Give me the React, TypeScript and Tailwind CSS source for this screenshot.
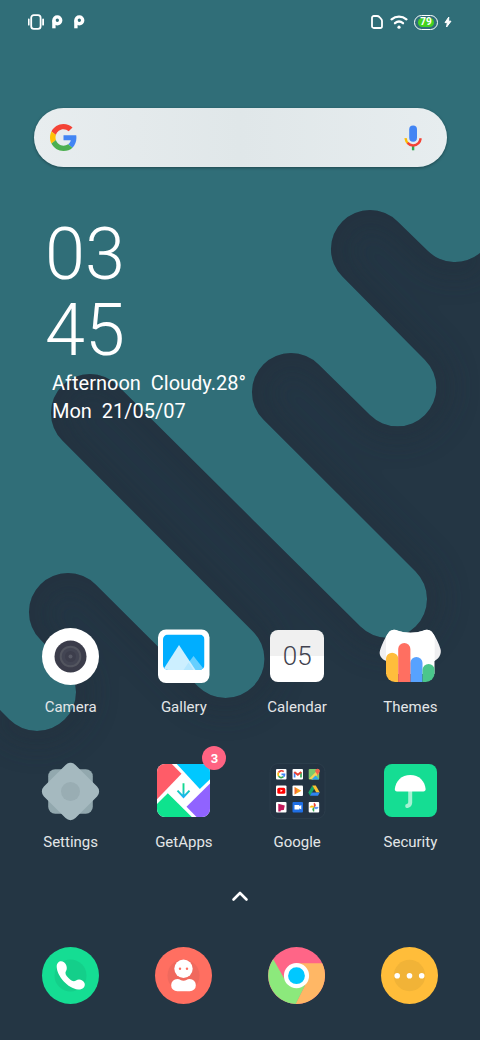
import type { ReactNode } from "react";

const DARK_EDGE =
  "M480 253A39 39 0 0 1 427.4 250.6L397.6 221.4A38 38 0 0 0 342.4 276.6L425 360A38 38 0 0 1 370 415L318.6 364.4A38 38 0 0 0 263.4 419.6L415.6 571.4A38 38 0 0 1 360.4 626.6L117.6 385.4A38 38 0 0 0 62.4 440.6L253 631.4A38 38 0 0 1 198 686.6L95.6 584.4A38 38 0 0 0 40.4 639.6L64.6 664.4A38 38 0 0 1 9.4 719.6L0 710";

const Wallpaper = () => (
  <svg
    className="col-start-1 row-start-1 h-full w-full"
    viewBox="0 0 480 1040"
    preserveAspectRatio="xMidYMid slice"
    aria-hidden="true"
  >
    <defs>
      <clipPath id="dark-clip">
        <path d={`${DARK_EDGE}V1040H480Z`} />
      </clipPath>
      <filter id="edge-blur" x="-20%" y="-20%" width="140%" height="140%">
        <feGaussianBlur stdDeviation="14" />
      </filter>
    </defs>
    <rect width="480" height="1040" fill="#306e78" />
    <path d={`${DARK_EDGE}V1040H480Z`} fill="#243644" />
    {/* soft shade along the cut-out edge */}
    <g clipPath="url(#dark-clip)">
      <path
        d={DARK_EDGE}
        fill="none"
        stroke="#202e3b"
        strokeWidth="30"
        opacity="0.4"
        filter="url(#edge-blur)"
      />
    </g>
  </svg>
);

const GoogleG = ({ className }: { className?: string }) => (
  <svg className={className} viewBox="0 0 48 48" aria-hidden="true">
    <path fill="#f44336" d="M24 9.5c3.54 0 6.71 1.22 9.21 3.6l6.85-6.85C35.9 2.38 30.47 0 24 0 14.62 0 6.51 5.38 2.56 13.22l7.98 6.19C12.43 13.72 17.74 9.5 24 9.5z" />
    <path fill="#4285f4" d="M46.98 24.55c0-1.57-.15-3.09-.38-4.55H24v9.02h12.94c-.58 2.96-2.26 5.48-4.78 7.18l7.73 6c4.51-4.18 7.09-10.36 7.09-17.65z" />
    <path fill="#ffc107" d="M10.53 28.59c-.48-1.45-.76-2.99-.76-4.59s.27-3.14.76-4.59l-7.98-6.19C.92 16.46 0 20.12 0 24c0 3.88.92 7.54 2.56 10.78l7.97-6.19z" />
    <path fill="#4caf50" d="M24 48c6.48 0 11.93-2.13 15.89-5.81l-7.73-6c-2.15 1.45-4.92 2.3-8.16 2.3-6.26 0-11.57-4.22-13.47-9.91l-7.98 6.19C6.51 42.62 14.62 48 24 48z" />
  </svg>
);

const ParkLogo = () => (
  <svg className="h-4 w-3" viewBox="0 0 12 16" aria-hidden="true">
    <circle cx="6.3" cy="6.3" r="3.4" fill="none" stroke="#fff" strokeWidth="3.4" />
    <path d="M1.2 6.3h3.4v8H1.2z" fill="#fff" />
  </svg>
);

const StatusBar = () => (
  <header className="flex h-11 items-center justify-between px-7">
    <div className="flex items-center">
      <svg className="h-4 w-4" viewBox="0 0 16 16" fill="none" stroke="#fff" aria-label="Vibrate">
        <rect x="3.2" y="1.2" width="9.4" height="13.6" rx="2.6" strokeWidth="1.8" />
        <path d="M.7 5.3v5.4M15.1 5.3v5.4" strokeWidth="1.8" strokeLinecap="round" />
      </svg>
      <div className="flex gap-[10px] pl-[7px]">
        <ParkLogo />
        <ParkLogo />
      </div>
    </div>
    <div className="flex items-center">
      <svg className="h-[14px] w-3" viewBox="0 0 12 14" fill="none" stroke="#fff" strokeWidth="1.8" strokeLinejoin="round" aria-label="SIM">
        <path d="M2.8 1H6c1 0 1.700.3 2.400 1l1.700 1.800c.6.6.9 1.300.9 2.200v5.200a1.800 1.800 0 0 1-1.800 1.800H2.800A1.800 1.800 0 0 1 1 11.200V2.800A1.800 1.800 0 0 1 2.800 1z" />
      </svg>
      <svg className="ml-[7px] h-4 w-[18px]" viewBox="0 0 18 16" fill="none" stroke="#fff" strokeWidth="2.300" strokeLinecap="round" aria-label="Wi-Fi">
        <path d="M1.600 5.300a11.500 11.500 0 0 1 14.800 0" />
        <path d="M5 9.200a6.300 6.300 0 0 1 8 0" />
        <circle cx="9" cy="13.200" r="1.600" fill="#fff" stroke="none" />
      </svg>
      <div className="ml-[6px] flex h-[15px] w-6 items-center justify-center rounded-full border border-white p-[2px]">
        <span className="flex h-full w-4 items-center justify-center rounded-full bg-[#43d21f] font-['Roboto',sans-serif] text-[10px] leading-none font-bold text-white">
          79
        </span>
      </div>
      <svg className="ml-[6px] h-3 w-2" viewBox="0 0 8 12" fill="#fff" aria-label="Charging">
        <path d="M4.800 1 1 6.600h2.300L2.600 11 7 5.200H4.600z" stroke="#fff" strokeLinejoin="round" />
      </svg>
    </div>
  </header>
);

const SearchBar = () => (
  <form
    role="search"
    onSubmit={(e) => e.preventDefault()}
    className="mr-[33px] ml-[34px] mt-16 flex h-[59px] items-center rounded-full bg-linear-to-r from-[#e8edef] via-[#e0e7e9] to-[#e7edef] pr-5 pl-4 shadow-[0_1px_3px_rgba(0,0,0,0.35)]"
  >
    <GoogleG className="h-[27px] w-[27px] shrink-0" />
    <input
      type="search"
      aria-label="Search Google"
      className="h-full min-w-0 flex-1 bg-transparent px-3 font-['Roboto',sans-serif] text-[16px] text-gray-800 outline-none"
    />
    <button type="button" aria-label="Voice search">
      <svg className="h-7 w-7" viewBox="0 0 28 28" fill="none">
        <rect x="10.200" y="1.500" width="7.800" height="16.200" rx="3.900" fill="#4285f4" />
        <path d="M14.100 22v4.300" stroke="#34a853" strokeWidth="2.400" />
        <path d="M6.500 14.200c.3 2.200 1.100 4 2.600 5.200" stroke="#fbbc05" strokeWidth="2.400" />
        <path d="M8.500 18.900c3 3.400 8 3.400 11 .3 1.200-1.300 1.900-3 2.200-5" stroke="#f44336" strokeWidth="2.400" />
      </svg>
    </button>
  </form>
);

const ClockWidget = () => (
  <section className="mt-[50px] pl-[45px] font-['Roboto',sans-serif] text-white">
    <time className="block text-[72px] leading-[76px] font-light whitespace-pre-line" dateTime="03:45">
      {"03\n45"}
    </time>
    <p className="pl-[7px] text-[20px] leading-7 whitespace-pre-line">
      Afternoon&nbsp; Cloudy.28°{"\n"}Mon&nbsp; 21/05/07
    </p>
  </section>
);

const Svg = ({ children }: { children: ReactNode }) => (
  <svg className="h-full w-full overflow-visible" viewBox="0 0 57 57" aria-hidden="true">
    {children}
  </svg>
);

const CameraIcon = () => (
  <Svg>
    <circle cx="28.5" cy="28.5" r="28.5" fill="#fff" />
    <circle cx="28.5" cy="28.5" r="16" fill="#3b3c4a" />
    <circle cx="28.5" cy="28.5" r="9.8" fill="#434553" stroke="#53555f" strokeWidth="2" />
    <circle cx="28.5" cy="28.5" r="5.5" fill="#3d3e4c" />
    <circle cx="28.5" cy="28.5" r="2" fill="#585a66" />
  </Svg>
);

const GalleryIcon = () => (
  <Svg>
    <clipPath id="gallery-photo">
      <rect x="8" y="6.5" width="41.5" height="35.5" rx="5" />
    </clipPath>
    <rect x="3" y="1.5" width="51.5" height="53.5" rx="8" fill="#fff" />
    <g clipPath="url(#gallery-photo)">
      <path d="M8 6.5h41.5V42H8z" fill="#00aeff" />
      <path d="M38.5 28 49.5 42H28z" fill="#66cfff" />
      <path d="M24 17 40.5 42H8z" fill="#ccefff" />
      <path d="m33.5 34.5 5 7.5H28.5z" fill="#b5e7ff" />
    </g>
  </Svg>
);

const CalendarIcon = () => (
  <div className="mx-auto mt-[2px] flex h-[52px] w-[54px] items-center justify-center rounded-[8px] bg-linear-to-b from-[#f0f0f0] from-50% to-white to-50% font-['Roboto',sans-serif] text-[26px] leading-none font-light text-[#41424f]">
    05
  </div>
);

const SHIRT =
  "M4.200 33C0 31.500-3.500 27.500-2 22.500-.5 17.500 3 9.500 6.500 4.700 9 1.500 12.500 1.300 16 2.700c7 2.600 18 2.600 25 0C44.500 1.300 48 1.500 50.500 4.700 54 9.500 57 16 58.500 21c1.500 5-2 10-6 12z";

const ThemesIcon = () => (
  <Svg>
    <clipPath id="themes-body">
      <path d="M4 0h48.700v45a9 9 0 0 1-9 9H13a9 9 0 0 1-9-9z" />
    </clipPath>
    <path d={SHIRT} fill="#efeff1" />
    <g clipPath="url(#themes-body)">
      <path d={SHIRT} fill="#fff" />
      <path d="M4 32h48.700v14H4z" fill="#fff" />
      <path d="M4 30.200a6.200 6.200 0 0 1 12.300 0V54H4z" fill="#ffbd3c" />
      <path d="M28.300 35a6.100 6.100 0 0 1 12.200 0v19H28.300z" fill="#57a2ff" />
      <path d="M40.500 42a6.100 6.100 0 0 1 12.200 0v12H40.500z" fill="#4bc68b" />
      <path d="M16.200 21a6.100 6.100 0 0 1 12.200 0v33H16.200z" fill="#ff6f61" />
    </g>
  </Svg>
);

const SettingsIcon = () => (
  <Svg>
    <rect x="6.2" y="6.2" width="44.6" height="44.6" rx="7" fill="#92a8ae" />
    <rect x="6.2" y="6.2" width="44.6" height="44.6" rx="7" fill="#a5b9bf" transform="rotate(45 28.5 28.5)" />
    <circle cx="28.5" cy="28.5" r="9.5" fill="#99adb3" />
  </Svg>
);

const GetAppsIcon = () => (
  <Svg>
    <clipPath id="getapps-tile">
      <rect x="2" y="1" width="53" height="53" rx="8" />
    </clipPath>
    <linearGradient id="getapps-arrow" x1="0" y1="20" x2="0" y2="35" gradientUnits="userSpaceOnUse">
      <stop offset="0.3" stopColor="#12d890" />
      <stop offset="0.9" stopColor="#19b4f5" />
    </linearGradient>
    <g clipPath="url(#getapps-tile)">
      <path d="M2 1h53v53H2z" fill="#fff" />
      <path d="M2 1h14.8l9.7 9.7L2 36.2z" fill="#ff5c68" />
      <path d="M21.8 1H55v15.3L44.8 26z" fill="#00c8ff" />
      <path d="M55 20.500V54H41.500l-10-10.300z" fill="#9063ff" />
      <path d="M12.800 30.300 36.800 54H2V41z" fill="#0ee38e" />
    </g>
    <path d="M28.500 20.300v14M22.500 27.700l6 6.300 6-6.300" fill="none" stroke="url(#getapps-arrow)" strokeWidth="1.9" />
  </Svg>
);

const GoogleFolderIcon = () => (
  <Svg>
    <rect x="1" y="0.5" width="55" height="55" rx="8" fill="#233342" stroke="#2b3d4b" />
    <g fill="#fff">
      <rect x="7" y="6" width="10.5" height="10.5" rx="1" />
      <rect x="23.500" y="6" width="10.5" height="10.5" rx="1" />
      <rect x="7" y="22.500" width="10.5" height="10.5" rx="1" />
      <rect x="23.500" y="22.500" width="10.5" height="10.5" rx="1" />
      <rect x="7" y="39" width="10.5" height="10.5" rx="1" />
      <rect x="39.700" y="39" width="10.5" height="10.5" rx="1" />
    </g>
    {/* search */}
    <g fill="none" strokeWidth="1.7">
      <path d="M9.500 9.500a3.300 3.300 0 0 1 5.200-.8" stroke="#ea4335" />
      <path d="M9.600 13.300a3.500 3.500 0 0 1-.1-3.800" stroke="#fbbc05" />
      <path d="M9.600 13.300a3.300 3.300 0 0 0 4.800.4" stroke="#34a853" />
      <path d="M14.400 13.700a3 3 0 0 0 1.100-2.300h-3" stroke="#4285f4" />
    </g>
    {/* mail */}
    <g fill="none" strokeWidth="1.7">
      <path d="M25.600 14.500v-5" stroke="#4285f4" />
      <path d="M32 14.500v-5" stroke="#34a853" />
      <path d="m25.300 9 3.500 2.800L32.300 9" stroke="#ea4335" strokeWidth="2" />
    </g>
    {/* maps */}
    <rect x="39.700" y="6" width="10.5" height="10.5" rx="1" fill="#7fc86c" />
    <path d="m40 15.800 9-9 1.200 3.200-6.200 6.500z" fill="#f7d154" />
    <path d="m42.500 16.500 4-4 3.700 4z" fill="#2aa4f4" />
    <path d="M46.200 7.500a2.500 2.500 0 0 1 4.700 0c.3 2-1.800 2.500-2.300 5-.5-2.500-2.600-3-2.400-5z" fill="#f2604f" />
    {/* video */}
    <rect x="8.300" y="24.800" width="8" height="6" rx="1.6" fill="#f00" />
    <path d="m11.500 26.500 2.300 1.300-2.300 1.300z" fill="#fff" />
    {/* music */}
    <path d="m25.700 24 6.700 3.800-6.700 3.700z" fill="#f9a11b" />
    <path d="m25.700 24 2.500 3.800-2.500 3.700z" fill="#f4653b" />
    {/* drive */}
    <path d="m43.300 22.500-4 7 1.800 3.200 4.200-7z" fill="#17a765" />
    <path d="M43.300 22.500h3.500l4 7h-3.500z" fill="#fbc22f" />
    <path d="M42.800 29.500h8L49 32.800h-8z" fill="#2f84f0" />
    {/* movies */}
    <path d="M9.300 40.800l6.500 1.700-1 4.500-3 .3-.3 1.200H9.300z" fill="#c2185b" />
    {/* duo */}
    <rect x="23.500" y="39" width="10.5" height="10.5" rx="1" fill="#1f6fe5" />
    <path d="M25.500 42h4.800v1.300l2-1.300v4.500l-2-1.300v1.300h-4.800z" fill="#fff" />
    {/* photos */}
    <path d="M45 44.300v-4.300a2.300 2.300 0 0 1 0 4.300z" fill="#ea4335" stroke="#ea4335" strokeWidth=".5" />
    <path d="M45 44.300h4.200a2.200 2.200 0 0 1-4.200 0z" fill="#4285f4" stroke="#4285f4" strokeWidth=".5" />
    <path d="M45 44.300v4.200a2.300 2.300 0 0 1 0-4.200z" fill="#34a853" stroke="#34a853" strokeWidth=".5" />
    <path d="M45 44.300h-4.200a2.200 2.200 0 0 1 4.200 0z" fill="#fbbc05" stroke="#fbbc05" strokeWidth=".5" />
  </Svg>
);

const SecurityIcon = () => (
  <Svg>
    <rect x="2" y="1" width="53" height="53" rx="8" fill="#15dd93" />
    <path d="M28.200 27v12.500a4 4 0 0 1-3 3.500" fill="none" stroke="#a5f2d3" strokeWidth="4" strokeLinecap="round" />
    <path d="M28.300 12c8.700 0 14.700 6.200 15.300 14 .1 1.600-.8 2.500-2.200 2.500H15c-1.500 0-2.300-1-2.200-2.500C13.600 18.200 19.600 12 28.300 12z" fill="#fff" />
  </Svg>
);

const PhoneIcon = () => (
  <Svg>
    <circle cx="28.5" cy="28.5" r="28.5" fill="#15dd93" />
    <circle cx="28.5" cy="28.5" r="16" fill="#14cf8a" />
    <path d="M14.700 19.500c0-5 4.300-6.700 7.300-4.300S25.500 22 24 24c-1.200 2-.5 4 2.500 7 3.500 3.500 5.500 4 7.500 2.500 3-2 7-.5 8.500 2.500 1.500 4-2.500 7-6.500 6.500C26 41.500 14.700 29 14.700 19.500z" fill="#fff" />
  </Svg>
);

const ContactsIcon = () => (
  <Svg>
    <circle cx="28.5" cy="28.5" r="28.5" fill="#ff6f61" />
    <circle cx="28.5" cy="28.5" r="16" fill="#f0695d" />
    <circle cx="28.5" cy="21.8" r="9.2" fill="#fff" />
    <circle cx="25" cy="21.8" r="1.2" fill="#ff6f61" />
    <circle cx="32" cy="21.8" r="1.2" fill="#ff6f61" />
    <path d="M22.300 32c3 0 3.700 1.800 6.200 1.800s3.200-1.800 6.200-1.800a6.100 6.100 0 0 1 0 12.300H22.300a6.100 6.100 0 0 1 0-12.300z" fill="#fff" />
  </Svg>
);

const ChromeIcon = () => (
  <Svg>
    <circle cx="28.5" cy="28.5" r="28.5" fill="#ff6587" />
    <path d="M28.500 16.200H54.200A28.500 28.500 0 0 1 27.700 57L37 38.500 28.500 28.500z" fill="#ffb765" />
    <path d="M5.300 12.300 16.300 31.800 28.500 28.500 37 38.500 27.700 57A28.500 28.500 0 0 1 5.300 12.300z" fill="#8ce97c" />
    <circle cx="28.5" cy="28.7" r="12.6" fill="#fff" />
    <circle cx="28.5" cy="28.7" r="8.4" fill="#00c8ff" />
  </Svg>
);

const MoreIcon = () => (
  <Svg>
    <circle cx="28.5" cy="28.5" r="28.5" fill="#ffbd3a" />
    <circle cx="28.5" cy="28.5" r="15.7" fill="#f1b337" />
    <g fill="#fff">
      <circle cx="16.2" cy="28.7" r="2.8" />
      <circle cx="28.5" cy="28.7" r="2.8" />
      <circle cx="40.7" cy="28.7" r="2.8" />
    </g>
  </Svg>
);

const apps = [
  { name: "Camera", Icon: CameraIcon },
  { name: "Gallery", Icon: GalleryIcon },
  { name: "Calendar", Icon: CalendarIcon },
  { name: "Themes", Icon: ThemesIcon },
  { name: "Settings", Icon: SettingsIcon },
  { name: "GetApps", Icon: GetAppsIcon, badge: 3 },
  { name: "Google", Icon: GoogleFolderIcon },
  { name: "Security", Icon: SecurityIcon },
];

const dock = [
  { name: "Phone", Icon: PhoneIcon },
  { name: "Contacts", Icon: ContactsIcon },
  { name: "Chrome", Icon: ChromeIcon },
  { name: "More", Icon: MoreIcon },
];

const App = () => {
  return (
    <div className="grid min-h-screen bg-[#243644]">
      <Wallpaper />

      <main className="z-10 col-start-1 row-start-1 flex flex-col">
        <StatusBar />
        <SearchBar />
        <ClockWidget />

        {/* App grid */}
        <div className="mt-auto grid grid-cols-4 gap-y-[46px] pt-10 pr-[13px] pl-[14px]">
          {apps.map(({ name, Icon, badge }) => (
            <button key={name} type="button" className="flex flex-col items-center gap-3">
              <span className="relative block h-[57px] w-[57px]">
                <Icon />
                {badge && (
                  <span className="absolute -top-[17px] -right-[14px] flex h-6 w-6 items-center justify-center rounded-full bg-[#ff6382] font-['Roboto',sans-serif] text-[13px] leading-none font-bold text-white">
                    {badge}
                  </span>
                )}
              </span>
              <span className="font-['Roboto',sans-serif] text-[15px] leading-5 text-[#e3e6e8]">{name}</span>
            </button>
          ))}
        </div>

        <button type="button" aria-label="Open app drawer" className="mx-auto mt-8 mb-[39px] h-6 w-6">
          <svg viewBox="0 0 24 24" fill="none" stroke="#fff" strokeWidth="2.6" strokeLinecap="round" strokeLinejoin="round">
            <path d="m5.500 15.500 6.500-6.500 6.500 6.500" />
          </svg>
        </button>

        {/* Dock */}
        <nav className="grid grid-cols-4 px-[14px] pb-9">
          {dock.map(({ name, Icon }) => (
            <button key={name} type="button" aria-label={name} className="mx-auto h-[57px] w-[57px]">
              <Icon />
            </button>
          ))}
        </nav>
      </main>
    </div>
  );
};

export default App;
